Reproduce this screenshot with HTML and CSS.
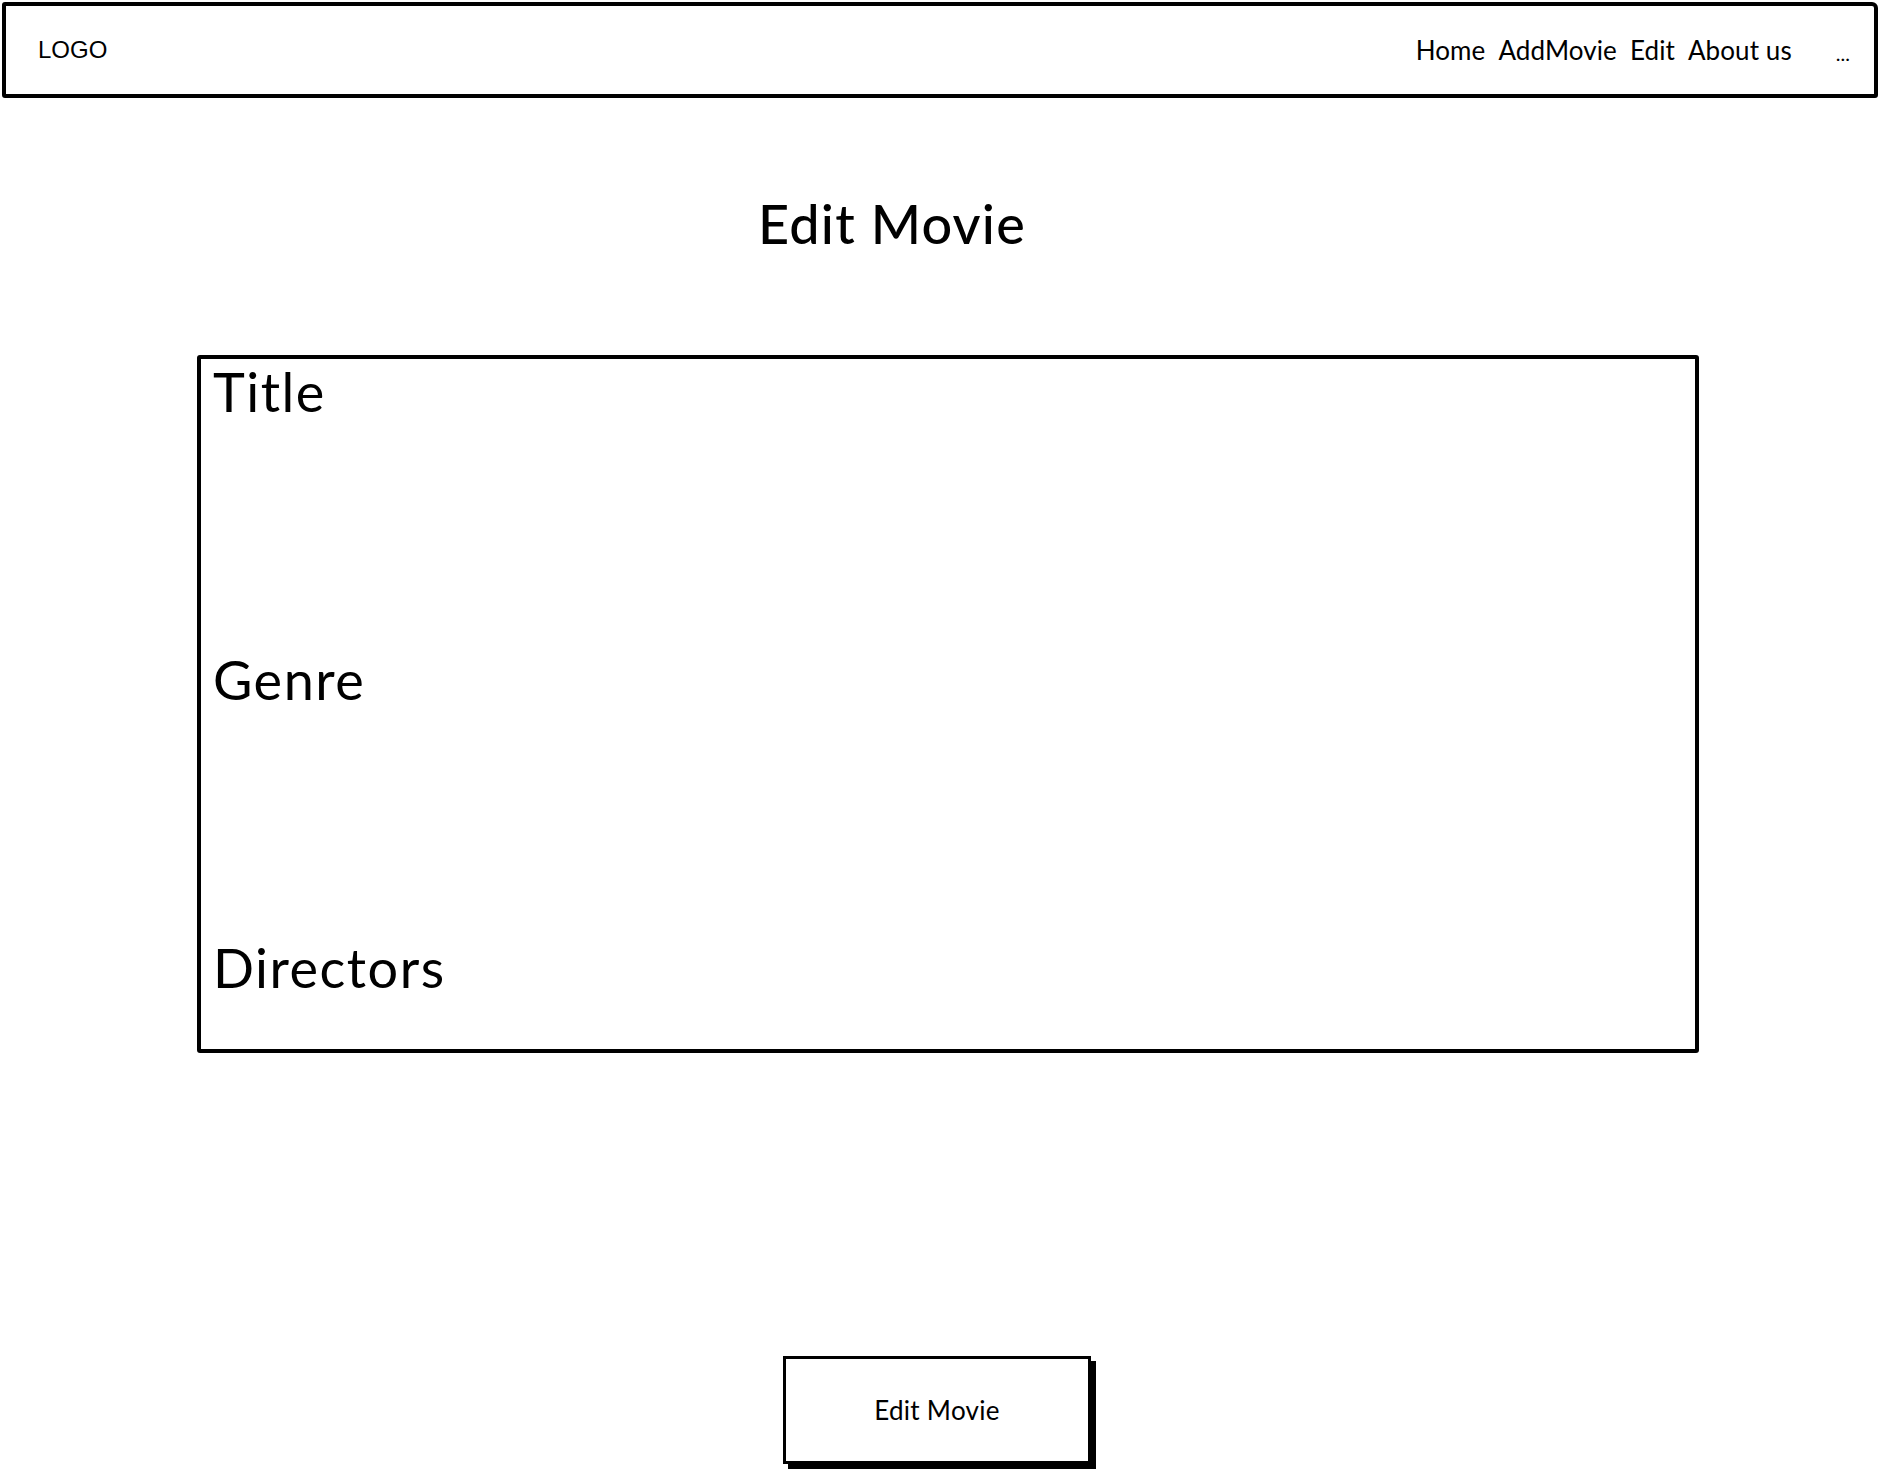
FILE: index.html
```html
<!DOCTYPE html>
<html lang="en">
<head>
    <meta charset="UTF-8">
    <title>Edit Movie</title>
    <link rel="stylesheet" href="styles.css">
</head>
<body>
    <div class="topbar">
        <div class="logo">LOGO</div>
        <div class="nav">
            <a class="nav-link" href="#">Home</a>
            <a class="nav-link" href="#">AddMovie</a>
            <a class="nav-link" href="#">Edit</a>
            <a class="nav-link" href="#">About us</a>
        </div>
        <div class="nav-more">...</div>
    </div>

    <h1 class="page-title">Edit Movie</h1>

    <div class="form-box">
        <div class="field-label">Title</div>
        <div class="field-label">Genre</div>
        <div class="field-label">Directors</div>
    </div>

    <div class="actions">
        <button class="btn-edit">Edit Movie</button>
    </div>
</body>
</html>
```

FILE: styles.css
```css
* {
    box-sizing: border-box;
    margin: 0;
    padding: 0;
}
body {
    font-family: Lato, "Noto Sans", sans-serif;
    color: #000;
    background: #fff;
    width: 1880px;
    height: 1474px;
    overflow: hidden;
}
.topbar {
    display: flex;
    align-items: center;
    height: 96px;
    margin: 2px 2px 0 2px;
    padding: 0 24px 0 32px;
    border: 4px solid #000;
    border-radius: 3px 6px 3px 3px;
}
.logo {
    font-family: "Liberation Sans", Arial, sans-serif;
    font-size: 24px;
    flex: 1;
}
.nav {
    display: flex;
    gap: 13px;
}
.nav-link {
    font-size: 26px;
    letter-spacing: 0.1px;
    color: #000;
    text-decoration: none;
}
.nav-more {
    font-size: 20px;
    margin-left: 44px;
    padding-top: 6px;
}
.page-title {
    font-size: 54px;
    font-weight: 500;
    letter-spacing: 1.2px;
    text-align: center;
    padding-right: 96px;
    margin-top: 96px;
    line-height: 60px;
}
.form-box {
    display: flex;
    flex-direction: column;
    gap: 222px;
    width: 1502px;
    height: 698px;
    margin: 101px 0 0 197px;
    padding: 0 0 0 12px;
    border: 4px solid #000;
    border-radius: 3px;
}
.field-label {
    font-size: 54px;
    letter-spacing: 1.5px;
    line-height: 66px;
}
.actions {
    display: flex;
    justify-content: center;
    padding-right: 6px;
    margin-top: 303px;
}
.btn-edit {
    width: 308px;
    height: 108px;
    font-family: Lato, "Noto Sans", sans-serif;
    font-size: 26px;
    letter-spacing: 0.3px;
    background: #fff;
    color: #000;
    border: 3px solid #000;
    box-shadow: 5px 5px 0 #000;
    cursor: pointer;
}
```
